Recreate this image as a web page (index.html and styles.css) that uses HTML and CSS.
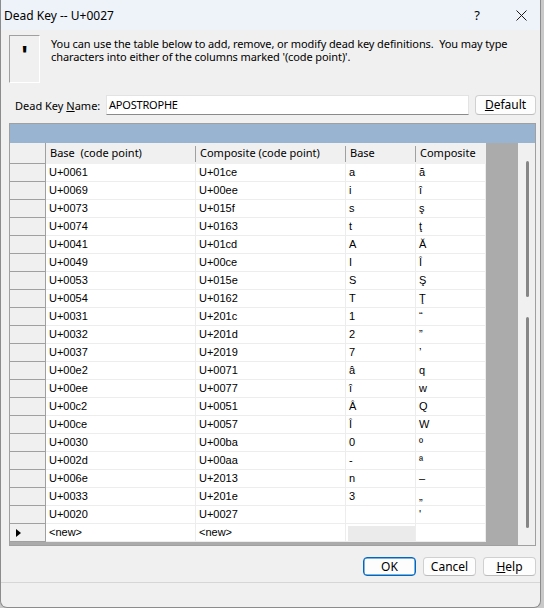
FILE: index.html
```html
<!DOCTYPE html>
<html>
<head>
<meta charset="utf-8">
<link rel="stylesheet" href="styles.css">
</head>
<body>
<div class="window">
  <div class="titlebar">
    <span class="title">Dead Key -- U+0027</span>
    <span class="tb-help">?</span>
    <span class="tb-close"><svg width="11" height="11" viewBox="0 0 11 11"><path d="M0.5 0.5 L10.5 10.5 M10.5 0.5 L0.5 10.5" stroke="#1a1a1a" stroke-width="1" fill="none"/></svg></span>
  </div>
  <div class="content">
    <div class="info">
      <div class="iconbox"><span class="apos">'</span></div>
      <div class="desc">You can use the table below to add, remove, or modify dead key definitions.&nbsp; You may type<br>characters into either of the columns marked '(code point)'.</div>
    </div>
    <div class="namerow">
      <span class="label">Dead Key <u>N</u>ame:</span>
      <div class="input">APOSTROPHE</div>
      <div class="btn btn-default"><u>D</u>efault</div>
    </div>
    <div class="grid">
      <div class="caption"></div>
      <div class="gridbody">
        <div class="cells">
          <div class="row hrow">
            <div class="rh"></div>
            <div class="hc">Base  (code point)</div>
            <div class="hc">Composite (code point)</div>
            <div class="hc">Base</div>
            <div class="hc last">Composite</div>
          </div>
          <div class="row"><div class="rh"></div><div class="c">U+0061</div><div class="c">U+01ce</div><div class="c">a</div><div class="c">ă</div></div>
          <div class="row"><div class="rh"></div><div class="c">U+0069</div><div class="c">U+00ee</div><div class="c">i</div><div class="c">î</div></div>
          <div class="row"><div class="rh"></div><div class="c">U+0073</div><div class="c">U+015f</div><div class="c">s</div><div class="c">ş</div></div>
          <div class="row"><div class="rh"></div><div class="c">U+0074</div><div class="c">U+0163</div><div class="c">t</div><div class="c">ţ</div></div>
          <div class="row"><div class="rh"></div><div class="c">U+0041</div><div class="c">U+01cd</div><div class="c">A</div><div class="c">Ă</div></div>
          <div class="row"><div class="rh"></div><div class="c">U+0049</div><div class="c">U+00ce</div><div class="c">I</div><div class="c">Î</div></div>
          <div class="row"><div class="rh"></div><div class="c">U+0053</div><div class="c">U+015e</div><div class="c">S</div><div class="c">Ş</div></div>
          <div class="row"><div class="rh"></div><div class="c">U+0054</div><div class="c">U+0162</div><div class="c">T</div><div class="c">Ţ</div></div>
          <div class="row"><div class="rh"></div><div class="c">U+0031</div><div class="c">U+201c</div><div class="c">1</div><div class="c">“</div></div>
          <div class="row"><div class="rh"></div><div class="c">U+0032</div><div class="c">U+201d</div><div class="c">2</div><div class="c">”</div></div>
          <div class="row"><div class="rh"></div><div class="c">U+0037</div><div class="c">U+2019</div><div class="c">7</div><div class="c">’</div></div>
          <div class="row"><div class="rh"></div><div class="c">U+00e2</div><div class="c">U+0071</div><div class="c">â</div><div class="c">q</div></div>
          <div class="row"><div class="rh"></div><div class="c">U+00ee</div><div class="c">U+0077</div><div class="c">î</div><div class="c">w</div></div>
          <div class="row"><div class="rh"></div><div class="c">U+00c2</div><div class="c">U+0051</div><div class="c">Â</div><div class="c">Q</div></div>
          <div class="row"><div class="rh"></div><div class="c">U+00ce</div><div class="c">U+0057</div><div class="c">Î</div><div class="c">W</div></div>
          <div class="row"><div class="rh"></div><div class="c">U+0030</div><div class="c">U+00ba</div><div class="c">0</div><div class="c">º</div></div>
          <div class="row"><div class="rh"></div><div class="c">U+002d</div><div class="c">U+00aa</div><div class="c">-</div><div class="c">ª</div></div>
          <div class="row"><div class="rh"></div><div class="c">U+006e</div><div class="c">U+2013</div><div class="c">n</div><div class="c">–</div></div>
          <div class="row"><div class="rh"></div><div class="c">U+0033</div><div class="c">U+201e</div><div class="c">3</div><div class="c">„</div></div>
          <div class="row"><div class="rh"></div><div class="c">U+0020</div><div class="c">U+0027</div><div class="c"> </div><div class="c">'</div></div>
          <div class="row"><div class="rh"><span class="arrow"></span></div><div class="c">&lt;new&gt;</div><div class="c">&lt;new&gt;</div><div class="c newcell"><span class="newfill"></span></div><div class="c"></div></div>
        </div>
        <div class="appspace"></div>
        <div class="vscroll">
          <div class="thumb t1"></div>
          <div class="thumb t2"></div>
        </div>
      </div>
    </div>
    <div class="buttons">
      <div class="btn btn-ok">OK</div>
      <div class="btn">Cancel</div>
      <div class="btn"><u>H</u>elp</div>
    </div>
  </div>
  <div class="statusline"></div>
</div>
</body>
</html>
```

FILE: styles.css
```css
html, body {
  margin: 0;
  padding: 0;
}
body {
  width: 544px;
  height: 608px;
  background: #c9c9c9;
  font-family: "Noto Sans", "Open Sans", sans-serif;
  font-size: 11px;
  color: #000;
  overflow: hidden;
}
.window {
  width: 541px;
  height: 608px;
  box-sizing: border-box;
  border: 1px solid #8c8c8c;
  border-top: none;
  border-radius: 0 0 7px 7px;
  background: #f0f0f0;
  overflow: hidden;
  display: flex;
  flex-direction: column;
}
.titlebar {
  height: 30px;
  flex: none;
  background: #eef3f9;
  display: flex;
  align-items: center;
  padding-left: 3px;
}
.title {
  flex: 1;
  font-size: 12px;
  color: #000;
}
.tb-help {
  width: 20px;
  text-align: center;
  font-size: 13px;
  margin-right: 24px;
}
.tb-close {
  width: 20px;
  height: 11px;
  display: flex;
  justify-content: center;
  margin-right: 9px;
}
.content {
  flex: 1;
  display: flex;
  flex-direction: column;
}
.info {
  display: flex;
  margin: 5px 0 0 8px;
  gap: 11px;
}
.iconbox {
  flex: none;
  width: 31px;
  height: 48px;
  box-sizing: border-box;
  border-top: 1px solid #a0a0a0;
  border-left: 1px solid #a0a0a0;
  border-right: 1px solid #fff;
  border-bottom: 1px solid #fff;
  display: flex;
  justify-content: center;
  padding-top: 6px;
}
.apos {
  font-family: "Liberation Sans", Arial, sans-serif;
  font-weight: bold;
  font-size: 26px;
  line-height: 26px;
  height: 26px;
}
.desc {
  line-height: 13px;
  padding-top: 2px;
  white-space: nowrap;
  letter-spacing: -0.1px;
}
.namerow {
  display: flex;
  align-items: center;
  margin-top: 12px;
  padding-left: 14px;
}
.label {
  width: 91px;
  flex: none;
  white-space: nowrap;
}
.input {
  flex: none;
  width: 363px;
  height: 20px;
  box-sizing: border-box;
  background: #fff;
  border: 1px solid #e3e3e3;
  border-bottom: 1px solid #8a8a8a;
  padding-left: 2px;
  font-size: 11px;
  letter-spacing: -0.2px;
  line-height: 18px;
}
.btn {
  flex: none;
  box-sizing: border-box;
  height: 19px;
  width: 53px;
  background: #fdfdfd;
  border: 1px solid #d0d0d0;
  border-bottom-color: #bcbcbc;
  border-radius: 4px;
  text-align: center;
  line-height: 17px;
  font-size: 12px;
}
.btn-default {
  width: 61px;
  height: 20px;
  margin-left: 6px;
  line-height: 18px;
}
.btn-ok {
  border: 1px solid #0067c0;
  box-shadow: inset 0 0 0 0.5px #0067c0;
}
.grid {
  margin: 8px 0 0 8px;
  width: 527px;
  box-sizing: border-box;
  border: 1px solid #a0a0a0;
  display: flex;
  flex-direction: column;
}
.caption {
  height: 19px;
  background: #99b4d1;
}
.gridbody {
  display: flex;
  height: 402px;
}
.cells {
  width: 476px;
  background: #ababab;
  font-family: "Liberation Sans", Arial, sans-serif;
  font-size: 11px;
}
.appspace {
  width: 32px;
  background: #ababab;
}
.vscroll {
  width: 17px;
  background: #f0f0f0;
  display: flex;
  flex-direction: column;
  align-items: center;
  padding-top: 18px;
  gap: 20px;
  box-sizing: border-box;
}
.thumb {
  width: 3px;
  background: #868686;
  border-radius: 1.5px;
  margin-left: 1px;
}
.t1 { height: 136px; }
.t2 { height: 211px; }
.row {
  display: grid;
  grid-template-columns: 36px 150px 150px 70px 70px;
  height: 18px;
}
.hrow {
  height: 21px;
}
.rh {
  background: #f0f0f0;
  border-right: 1px solid #a0a0a0;
  border-bottom: 1px solid #a0a0a0;
  box-sizing: border-box;
  display: flex;
  align-items: center;
  padding-left: 6px;
}
.hc {
  position: relative;
  background: #f0f0f0;
  font-family: "Noto Sans", "Open Sans", sans-serif;
  font-size: 11px;
  line-height: 20px;
  padding-left: 4px;
  white-space: pre;
  box-sizing: border-box;
}
.hc::after {
  content: "";
  position: absolute;
  right: 0;
  top: 3px;
  bottom: 2px;
  width: 1px;
  background: #a0a0a0;
}
.hc.last::after {
  display: none;
}
.c {
  background: #fff;
  border-right: 1px solid #ededed;
  border-bottom: 1px solid #ededed;
  box-sizing: border-box;
  padding-left: 3px;
  line-height: 17px;
  white-space: pre;
}
.newcell {
  padding: 2px 0 0 2px;
}
.newfill {
  display: block;
  height: 15px;
  background: #ebebeb;
}
.arrow {
  display: block;
  width: 0;
  height: 0;
  border-left: 5px solid #000;
  border-top: 4.5px solid transparent;
  border-bottom: 4.5px solid transparent;
}
.buttons {
  display: flex;
  justify-content: flex-end;
  gap: 7px;
  margin-top: 11px;
  padding-right: 4px;
}
.statusline {
  height: 24px;
  flex: none;
  border-top: 1px solid #d6d6d6;
}
```
